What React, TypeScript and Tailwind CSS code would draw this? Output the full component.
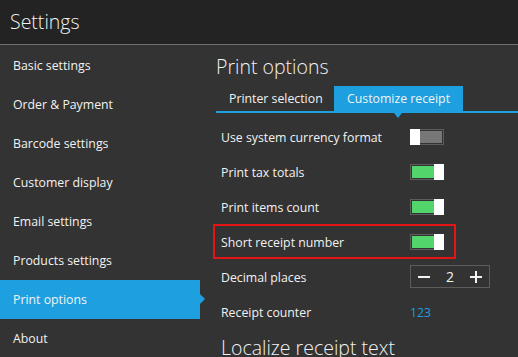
import React from 'react'

const menu = [
  'Basic settings',
  'Order & Payment',
  'Barcode settings',
  'Customer display',
  'Email settings',
  'Products settings',
  'Print options',
  'About',
]

function Toggle({ on }: { on: boolean }) {
  return (
    <div className="relative w-[34px] h-[16px]">
      <div className="absolute inset-0 border border-[#5c5c5c] p-[1px]">
        <div className={on ? 'w-full h-full bg-[#52d56b]' : 'w-full h-full bg-[#777777]'} />
      </div>
      <div className={'absolute top-0 w-[10px] h-[16px] bg-white ' + (on ? 'right-0' : 'left-0')} />
    </div>
  )
}

function Row({ label, children, marked }: { label: string; children: React.ReactNode; marked?: boolean }) {
  return (
    <div className="relative flex items-center h-[35px]">
      <div className="w-[189px] text-[12.3px] pt-[3px]">{label}</div>
      {children}
      {marked && <div className="absolute left-[-8px] top-0 w-[243px] h-[35px] border-2 border-[#e61414]" />}
    </div>
  )
}

export default function App() {
  return (
    <div
      className="w-[518px] h-[357px] overflow-hidden bg-[#333333] text-[#f2f2f2]"
      style={{ fontFamily: '"Open Sans", "Noto Sans", sans-serif' }}
    >
      <div className="h-[45px] bg-[#232323] border-b border-[#6e6e6e] flex items-center pl-[10px]">
        <span className="text-[19.5px] font-light leading-none pb-[1px]">Settings</span>
      </div>
      <div className="flex pt-[1px]">
        <div className="w-[200px] shrink-0">
          {menu.map((m) => (
            <div
              key={m}
              className={
                'relative h-[39px] flex items-center pl-[13px] pt-[2px] text-[12.3px] ' +
                (m === 'Print options' ? 'bg-[#1ea0e0]' : '')
              }
            >
              {m}
              {m === 'Print options' && (
                <span className="absolute right-[-5px] top-[14px] w-0 h-0 border-y-[5px] border-y-transparent border-l-[5px] border-l-[#1ea0e0]" />
              )}
            </div>
          ))}
        </div>
        <div className="flex-1 pl-[16px]">
          <div className="h-[40px] flex items-center text-[19.5px] font-light pt-[2px]">Print options</div>
          <div className="flex border-b-2 border-[#1ea0e0] h-[27px]">
            <div className="w-[118px] pl-[13px] pt-[2px] flex items-center text-[12.3px]">Printer selection</div>
            <div className="relative w-[129px] pl-[13px] pt-[2px] flex items-center text-[12.3px] bg-[#1ea0e0]">
              Customize receipt
              <span className="absolute left-[60px] bottom-[-7px] w-0 h-0 border-x-[4px] border-x-transparent border-t-[5px] border-t-[#1ea0e0]" />
            </div>
          </div>
          <div className="pl-[5px] pt-[6px]">
            <Row label="Use system currency format">
              <Toggle on={false} />
            </Row>
            <Row label="Print tax totals">
              <Toggle on />
            </Row>
            <Row label="Print items count">
              <Toggle on />
            </Row>
            <Row label="Short receipt number" marked>
              <Toggle on />
            </Row>
            <Row label="Decimal places">
              <div className="w-[80px] h-[23px] border border-[#5c5c5c] flex items-center justify-between px-[7px]">
                <span className="w-[12px] h-[2px] bg-[#f2f2f2]" />
                <span className="text-[14px]">2</span>
                <span className="relative w-[12px] h-[12px]">
                  <span className="absolute left-0 top-[5px] w-[12px] h-[2px] bg-[#f2f2f2]" />
                  <span className="absolute left-[5px] top-0 w-[2px] h-[12px] bg-[#f2f2f2]" />
                </span>
              </div>
            </Row>
            <Row label="Receipt counter">
              <span className="text-[12.3px] text-[#1e9be0] pt-[3px]">123</span>
            </Row>
            <div className="text-[19.5px] font-light pt-[9px] leading-none">Localize receipt text</div>
          </div>
        </div>
      </div>
    </div>
  )
}
